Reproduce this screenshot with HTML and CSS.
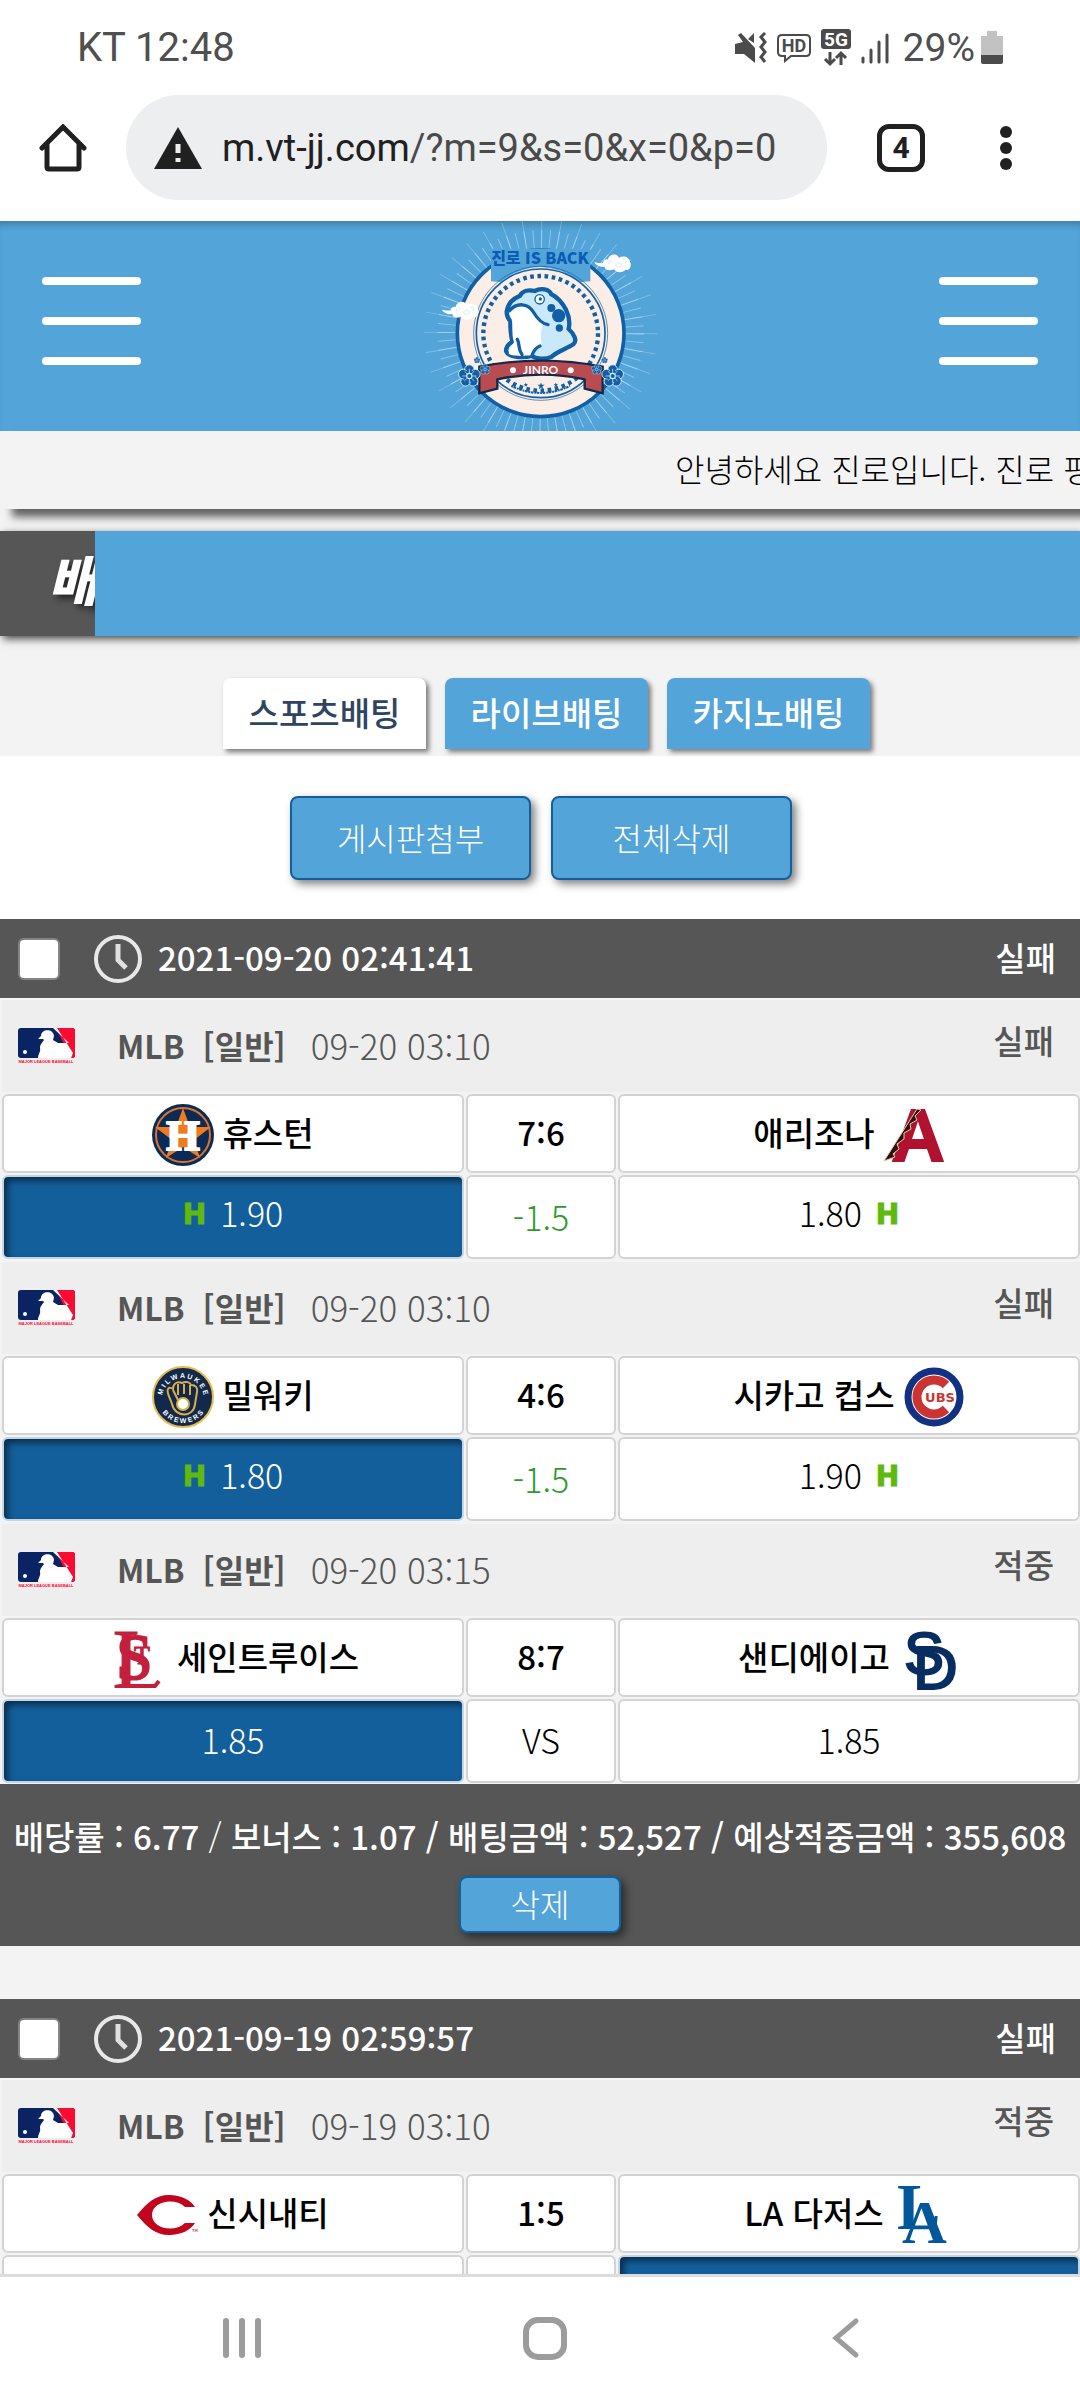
FILE: index.html
```html
<!DOCTYPE html>
<html lang="ko">
  <head>
    <meta charset="utf-8">
    <title>배팅내역</title>
    <meta name="viewport" content="width=device-width, initial-scale=1">
    <link rel="stylesheet" href="styles.css">
  </head>
  <body>
    <!-- shared icons -->
    <svg class="defs" width="0" height="0" aria-hidden="true">
      <symbol id="mlb" viewBox="0 0 57 36">
        <rect width="57" height="30" rx="3" fill="#0a2463"/>
        <path d="M38 0h16a3 3 0 0 1 3 3v24a3 3 0 0 1-3 3h-1z" fill="#fb0a32"/>
        <path d="M35 0h4l16 25-2 5H20c0-4 3-6 2-10 0-4 3-6 4-8l-1-1-5 0 3-3c0-7 12-8 13 0l-1 4 5 3 11 0z" fill="#fff"/>
        <circle cx="7" cy="24" r="2" fill="#fff"/>
      </symbol>
      <symbol id="clock" viewBox="0 0 48 48">
        <circle cx="24" cy="24" r="22" fill="none" stroke="#e8e8e8" stroke-width="4"/>
        <path d="M24 9v16l8 8" fill="none" stroke="#e0e0e0" stroke-width="5"/>
      </symbol>
      <symbol id="flower" viewBox="-34 -34 68 68">
        <g fill="#1160a6" stroke="#fff" stroke-width="2">
          <circle cx="0" cy="-17" r="13"/><circle cx="16" cy="-5" r="13"/><circle cx="10" cy="14" r="13"/>
          <circle cx="-10" cy="14" r="13"/><circle cx="-16" cy="-5" r="13"/>
        </g>
        <circle r="16" fill="#1160a6"/>
        <path d="M0-19V19M-19 0H19M-13-13L13 13M13-13L-13 13" stroke="#d7ebf8" stroke-width="2"/>
        <circle r="7" fill="#1160a6" stroke="#d7ebf8" stroke-width="3"/>
      </symbol>
      <symbol id="cloud" viewBox="0 0 110 60">
        <path d="M0 28c12 2 18 4 26 2 1-8 8-13 15-10 2-16 25-22 33-6 12-8 32-2 33 12 6 10 0 28-14 25-12 10-28 8-34-2-12 6-28 2-28-8-12 2-28-4-31-13z" fill="#fff"/>
        <path d="M46 34c-8-6 4-16 10-7M72 44c-14-4-4-20 8-12 6 5 0 12-6 8M86 20c10-2 12 10 4 10" fill="none" stroke="#b9dcf1" stroke-width="2"/>
      </symbol>
      <symbol id="star" viewBox="-10 -10 20 20">
        <path d="M0-9L2.4-3H9L3.6 1 5.6 8 0 4-5.6 8-3.6 1-9-3h6.6z" fill="#1160a6"/>
      </symbol>
    </svg>

    <div class="status-bar">
      <span>KT 12:48</span>
      <div class="status-icons">
        <svg width="32" height="32" viewBox="0 0 32 32">
          <path d="M0 12l8-2L3 3l3-2 14 15v15L9 22H0zM13 7l6-6v10z" fill="#4b4b4b"/>
          <path d="M30 1l-4 4 4 5-4 5 4 5-4 5 4 5" fill="none" stroke="#4b4b4b" stroke-width="3"/>
        </svg>
        <svg width="34" height="30" viewBox="0 0 34 30">
          <path d="M5 2h24q4 0 4 4v13q0 4-4 4H14l-6 5v-5H5q-4 0-4-4V6q0-4 4-4z" fill="none" stroke="#4b4b4b" stroke-width="2"/>
          <text x="17" y="19" font-size="18" font-weight="bold" text-anchor="middle" fill="#4b4b4b">HD</text>
        </svg>
        <svg width="30" height="38" viewBox="0 0 30 38">
          <rect width="30" height="20" rx="3" fill="#4b4b4b"/>
          <text x="15" y="17" font-size="19" font-weight="bold" text-anchor="middle" fill="#fff">5G</text>
          <path d="M9 23v12M4 30l5 5 5-5M20 36V24M15 29l5-5 5 5" fill="none" stroke="#4b4b4b" stroke-width="3"/>
        </svg>
        <svg width="28" height="32" viewBox="0 0 28 32">
          <path d="M2 26v4M10 18v12M18 10v20M26 3v27" stroke="#4b4b4b" stroke-width="3" stroke-linecap="round"/>
        </svg>
        <div class="battery">
          <span>29%</span>
          <svg width="22" height="34" viewBox="0 0 22 34">
            <path d="M6 0h10v5h6v19H0V5h6z" fill="#c2c2c2"/>
            <path d="M0 24h22v7q0 2-2 2H2q-2 0-2-2z" fill="#4b4b4b"/>
          </svg>
        </div>
      </div>
    </div>

    <div class="toolbar">
      <button class="icon-button" aria-label="홈">
        <svg width="48" height="48" viewBox="0 0 48 48">
          <path d="M3 24L24 3l21 21M8 21v22q0 2 2 2h28q2 0 2-2V21" fill="none" stroke="#202020" stroke-width="5" stroke-linecap="round"/>
        </svg>
      </button>
      <div class="url">
        <svg width="48" height="42" viewBox="0 0 48 42">
          <path d="M24 0l24 42H0z" fill="#202020"/>
          <path d="M24 17v9M24 31v4" stroke="#edeef0" stroke-width="5"/>
        </svg>
        <span>m.vt-jj.com<span class="url-path">/?m=9&amp;s=0&amp;x=0&amp;p=0</span></span>
      </div>
      <button class="tab-count">4</button>
      <button class="icon-button" aria-label="메뉴">
        <svg width="12" height="48" viewBox="0 0 12 48" fill="#202020">
          <circle cx="6" cy="8" r="6"/><circle cx="6" cy="24" r="6"/><circle cx="6" cy="40" r="6"/>
        </svg>
      </button>
    </div>

    <main class="page">
      <header class="header">
        <button class="menu" aria-label="왼쪽 메뉴"><i></i><i></i><i></i></button>
        <svg class="logo" width="280" height="210" viewBox="0 3 840 630">
          <g fill="none" stroke="#fff">
            <circle cx="422" cy="340" r="280" stroke-width="60" stroke-opacity=".35" pathLength="720" stroke-dasharray="1.2 8.8"/>
            <circle cx="422" cy="340" r="300" stroke-width="100" stroke-opacity=".25" pathLength="720" stroke-dasharray="1 19"/>
          </g>
          <circle cx="422" cy="340" r="250" fill="#fbeee6" stroke="#1160a6" stroke-width="11"/>
          <path d="M273 184V86h298v98l-30 2q-120-90-240 0z" fill="#53a4d8"/>
          <g fill="none" stroke="#1160a6">
            <circle cx="422" cy="340" r="193" fill="#fbeee6" stroke-width="5"/>
            <circle cx="422" cy="340" r="201" stroke-width="2"/>
          </g>
          <circle cx="422" cy="340" r="172" fill="none" stroke="#1160a6" stroke-width="13" pathLength="50" stroke-dasharray=".5 .5"/>
          <text class="logo-title" x="420" y="132" text-anchor="middle">진로 IS BACK</text>
          <!-- toad -->
          <path d="M320 275c5-28 18-38 40-48 8-16 28-18 44-14 18-10 44-6 50 10 22 10 34 28 44 46 10 20 12 40 8 58 18 16 26 36 14 46-20 14-48 20-66 38-20 8-50 6-58-4-24 8-72 6-78-14 0-16 12-24 20-28-6-16-8-50-6-62-10-8-12-16-12-28z" fill="#c9e8f9" stroke="#1160a6" stroke-width="13"/>
          <path d="M330 282c18-30 50-28 66-6 12 18 22 28 34 34-10 24-8 50-4 66-14 8-20 24-30 30-24 2-66 4-70-6 2-18 12-24 16-34-10-30 2-50-12-84z" fill="#fff"/>
          <path d="M328 272c24-26 56-22 72 4 12 20 24 36 44 38M352 358c8 12 0 26 14 46M420 378c-16 6-20 18-24 28" fill="none" stroke="#1160a6" stroke-width="10" stroke-linecap="round"/>
          <circle cx="419" cy="238" r="14" fill="#fff" stroke="#1160a6" stroke-width="4"/>
          <circle cx="421" cy="237" r="5" fill="#1160a6"/>
          <g fill="#1160a6">
            <circle cx="454" cy="264" r="12"/><circle cx="476" cy="287" r="20"/><circle cx="478" cy="324" r="11"/>
          </g>
          <!-- ribbon -->
          <path d="M238 440q185-36 370 0v80l-54-14v-28q-130-28-262 0v28l-54 14z" fill="#b94c50" stroke="#13294b" stroke-width="7"/>
          <text x="422" y="461" font-family="Lato" font-size="36" font-weight="bold" text-anchor="middle" fill="#fff">JINRO</text>
          <circle cx="339" cy="451" r="9" fill="#fff"/>
          <circle cx="512" cy="451" r="9" fill="#fff"/>
          <use href="#star" x="411" y="486" width="24" height="24"/>
          <use href="#star" x="370" y="487" width="15" height="15"/>
          <use href="#star" x="460" y="487" width="15" height="15"/>
          <path d="M334 498q88 42 176 0" fill="none" stroke="#1160a6" stroke-width="6" stroke-dasharray="5 2 8 3"/>
          <use href="#flower" x="170" y="430" width="76" height="76"/>
          <use href="#flower" x="237" y="430" width="36" height="36"/>
          <use href="#flower" x="220" y="410" width="22" height="22"/>
          <use href="#flower" x="600" y="430" width="76" height="76"/>
          <use href="#flower" x="572" y="430" width="36" height="36"/>
          <use href="#flower" x="603" y="410" width="22" height="22"/>
          <use href="#cloud" x="126" y="241" width="110" height="60"/>
          <use href="#cloud" x="583" y="99" width="110" height="60"/>
        </svg>
        <button class="menu" aria-label="오른쪽 메뉴"><i></i><i></i><i></i></button>
      </header>

      <div class="notice">안녕하세요 진로입니다. 진로 평</div>

      <div class="title-bar"><h1>배</h1></div>

      <div class="tabs">
        <button class="tab active">스포츠배팅</button>
        <button class="tab">라이브배팅</button>
        <button class="tab">카지노배팅</button>
      </div>

      <div class="actions">
        <button class="btn">게시판첨부</button>
        <button class="btn">전체삭제</button>
      </div>

      <section class="bet">
        <div class="bet-head">
          <input type="checkbox" aria-label="2021-09-20 02:41:41">
          <svg width="48" height="48"><use href="#clock"/></svg>
          <span class="bet-time">2021-09-20 02:41:41</span>
          <b>실패</b>
        </div>

        <div class="match">
          <div class="league">
            <svg class="mlb" width="57" height="36" viewBox="0 0 57 36"><use href="#mlb"/><text x="28" y="35">MAJOR LEAGUE BASEBALL</text></svg>
            <b>MLB</b><b>[일반]</b>
            <span class="match-time">09-20 03:10</span>
            <span class="result">실패</span>
          </div>
          <div class="grid">
            <div class="cell team">
              <svg width="62" height="62" viewBox="0 0 62 62">
                <circle cx="31" cy="31" r="31" fill="#0b2a55"/>
                <circle cx="31" cy="31" r="27" fill="none" stroke="#d9742f" stroke-width="2"/>
                <path d="M31 4l7 19h21L42 36l6 18-17-11-17 11 6-18L3 23h21z" fill="#f07a1e"/>
                <text x="31" y="46" font-family="Liberation Serif" font-size="43" font-weight="bold" text-anchor="middle" fill="#fff" stroke="#fff" stroke-width="2">H</text>
              </svg>
              휴스턴
            </div>
            <div class="cell team">7:6</div>
            <div class="cell team">
              애리조나
              <svg width="62" height="62" viewBox="0 0 62 62">
                <text x="35" y="57" font-family="Liberation Sans" font-size="74" font-weight="bold" text-anchor="middle" fill="#b1122f" stroke="#b1122f" stroke-width="2">A</text>
                <path d="M1 57L34 5l4 1-6 6 2 4-7 4 1 5-7 4 0 6-7 5 2 5-6 5 2 3z" fill="#2b1210" stroke="#e6cfa5" stroke-width="1"/>
              </svg>
            </div>
            <div class="cell odds marked picked"><i class="handicap">H</i>1.90</div>
            <div class="cell odds line">-1.5</div>
            <div class="cell odds marked">1.80<i class="handicap">H</i></div>
          </div>
        </div>

        <div class="match">
          <div class="league">
            <svg class="mlb" width="57" height="36" viewBox="0 0 57 36"><use href="#mlb"/><text x="28" y="35">MAJOR LEAGUE BASEBALL</text></svg>
            <b>MLB</b><b>[일반]</b>
            <span class="match-time">09-20 03:10</span>
            <span class="result">실패</span>
          </div>
          <div class="grid">
            <div class="cell team">
              <svg width="62" height="62" viewBox="0 0 62 62">
                <defs>
                  <path id="arc-top" d="M10 33a21 21 0 0 1 42 0"/>
                  <path id="arc-bottom" d="M5 31a26 26 0 0 0 52 0"/>
                </defs>
                <circle cx="31" cy="31" r="30" fill="#13294b" stroke="#e5bb52" stroke-width="2"/>
                <g font-family="Liberation Sans" font-size="7" font-weight="bold" fill="#fff" text-anchor="middle">
                  <text><textPath href="#arc-top" startOffset="50%">M I L W A U K E E</textPath></text>
                  <text><textPath href="#arc-bottom" startOffset="50%">B R E W E R S</textPath></text>
                </g>
                <path d="M20 38c-2-6-6-12-4-15 1-2 4-1 5 0 0-6 5-8 9-6 4-2 8-1 9 2 5 0 7 3 6 7l-2 12c-1 14-20 14-23 0zM21 24l5 10M26 18v11M32 18v10M38 19v10" fill="none" stroke="#d8ae4c" stroke-width="2"/>
                <circle cx="31" cy="38" r="6" fill="#fff" stroke="#d8ae4c" stroke-width="2"/>
              </svg>
              밀워키
            </div>
            <div class="cell team">4:6</div>
            <div class="cell team">
              시카고 컵스
              <svg width="62" height="62" viewBox="0 0 62 62">
                <circle cx="31" cy="31" r="26" fill="#fff" stroke="#123183" stroke-width="7"/>
                <path d="M43 19a17 17 0 1 0 0 24" fill="none" stroke="#cb3433" stroke-width="9"/>
                <text x="37" y="36" font-family="DejaVu Sans" font-size="13" font-weight="bold" text-anchor="middle" fill="#cb3433">UBS</text>
              </svg>
            </div>
            <div class="cell odds marked picked"><i class="handicap">H</i>1.80</div>
            <div class="cell odds line">-1.5</div>
            <div class="cell odds marked">1.90<i class="handicap">H</i></div>
          </div>
        </div>

        <div class="match">
          <div class="league">
            <svg class="mlb" width="57" height="36" viewBox="0 0 57 36"><use href="#mlb"/><text x="28" y="35">MAJOR LEAGUE BASEBALL</text></svg>
            <b>MLB</b><b>[일반]</b>
            <span class="match-time">09-20 03:15</span>
            <span class="result">적중</span>
          </div>
          <div class="grid">
            <div class="cell team">
              <svg width="62" height="62" viewBox="0 0 62 62">
                <g font-family="Liberation Serif" fill="#c2203c" stroke="#c2203c">
                  <text x="9" y="51" font-size="66" stroke-width="2">S</text>
                  <text x="5" y="60" font-size="84" stroke-width="1">I</text>
                  <text x="27" y="36" font-size="26" stroke-width="1">T</text>
                </g>
                <path d="M19 58h29l4-5" fill="none" stroke="#c2203c" stroke-width="4"/>
              </svg>
              세인트루이스
            </div>
            <div class="cell team">8:7</div>
            <div class="cell team">
              샌디에이고
              <svg width="62" height="62" viewBox="0 0 62 62">
                <g font-family="Liberation Sans" fill="#072d61" stroke="#072d61" stroke-width="2">
                  <text x="6" y="46" font-size="60">S</text>
                  <text x="15" y="61" font-size="62">D</text>
                </g>
              </svg>
            </div>
            <div class="cell odds picked">1.85</div>
            <div class="cell odds">VS</div>
            <div class="cell odds">1.85</div>
          </div>
        </div>

        <div class="bet-foot">
          <p><b>배당률 : 6.77</b> / <b>보너스 : 1.07 / 배팅금액 : 52,527 / 예상적중금액 : 355,608</b></p>
          <button class="btn btn-small">삭제</button>
        </div>
      </section>

      <section class="bet">
        <div class="bet-head">
          <input type="checkbox" aria-label="2021-09-19 02:59:57">
          <svg width="48" height="48"><use href="#clock"/></svg>
          <span class="bet-time">2021-09-19 02:59:57</span>
          <b>실패</b>
        </div>

        <div class="match">
          <div class="league">
            <svg class="mlb" width="57" height="36" viewBox="0 0 57 36"><use href="#mlb"/><text x="28" y="35">MAJOR LEAGUE BASEBALL</text></svg>
            <b>MLB</b><b>[일반]</b>
            <span class="match-time">09-19 03:10</span>
            <span class="result">적중</span>
          </div>
          <div class="grid">
            <div class="cell team">
              <svg width="62" height="62" viewBox="0 0 62 62">
                <path d="M0 31C10 19 18 11 32 11c12 0 22 5 26 12H48C38 13 15 17 15 31s23 18 33 8h10c-4 7-14 12-26 12C18 51 10 43 0 31z" fill="#c2051e"/>
                <text x="55" y="48" font-size="4" fill="#c2051e">TM</text>
              </svg>
              신시내티
            </div>
            <div class="cell team">1:5</div>
            <div class="cell team">
              LA 다저스
              <svg width="62" height="62" viewBox="0 0 62 62">
                <g font-family="Liberation Serif" font-weight="bold" fill="#04579b">
                  <text x="5" y="45" font-size="65">L</text>
                  <text x="10" y="59" font-size="62">A</text>
                </g>
              </svg>
            </div>
            <div class="cell odds"></div>
            <div class="cell odds"></div>
            <div class="cell odds picked"></div>
          </div>
        </div>
      </section>
    </main>

    <nav class="nav">
      <button class="icon-button" aria-label="최근 앱">
        <svg width="40" height="42" viewBox="0 0 40 42">
          <path d="M4 4v34M20 4v34M36 4v34" stroke="#9c9c9c" stroke-width="6" stroke-linecap="round"/>
        </svg>
      </button>
      <button class="icon-button" aria-label="홈 화면">
        <svg width="44" height="44" viewBox="0 0 44 44">
          <rect x="3" y="4" width="38" height="37" rx="12" fill="none" stroke="#9c9c9c" stroke-width="6"/>
        </svg>
      </button>
      <button class="icon-button" aria-label="뒤로">
        <svg width="40" height="42" viewBox="0 0 40 42">
          <path d="M29 4L9 21l20 17" fill="none" stroke="#9c9c9c" stroke-width="5" stroke-linecap="round"/>
        </svg>
      </button>
    </nav>
  </body>
</html>
```
FILE: styles.css
```css
* {
  box-sizing: border-box;
}
body {
  display: flex;
  flex-direction: column;
  height: 100vh;
  margin: 0;
  background-color: #fff;
  font-family: "Noto Sans CJK KR", sans-serif;
  font-size: 32px;
  line-height: 40px;
  color: #000;
}
button {
  margin: 0;
  padding: 0;
  border: 0;
  background: none;
  font: inherit;
  color: inherit;
  cursor: pointer;
}
svg {
  display: block;
  flex: none;
}
.defs {
  position: absolute;
}
.status-bar {
  display: flex;
  justify-content: space-between;
  align-items: center;
  height: 95px;
  padding: 0 77px;
  font-family: Roboto, sans-serif;
  font-size: 40px;
  color: #4f4f4f;
}
.status-icons {
  display: flex;
  align-items: center;
  gap: 10px;
}
.battery {
  display: flex;
  align-items: center;
  gap: 6px;
  padding-left: 4px;
  font-size: 39px;
}
.toolbar {
  display: flex;
  align-items: center;
  height: 126px;
  padding: 0 68px 21px 39px;
  font-family: Roboto, sans-serif;
}
.icon-button {
  display: flex;
}
.url {
  display: flex;
  flex: 1;
  align-items: center;
  gap: 20px;
  height: 105px;
  margin: 0 50px 0 39px;
  padding-left: 28px;
  border-radius: 53px;
  background-color: #edeef0;
  font-size: 38px;
  color: #202020;
  white-space: nowrap;
}
.url-path {
  color: #4a4a4a;
}
.tab-count {
  width: 48px;
  height: 48px;
  margin-right: 75px;
  border: 5px solid #202020;
  border-radius: 12px;
  font-size: 30px;
  line-height: 38px;
  font-weight: bold;
  color: #202020;
}
.page {
  flex: 1;
  min-height: 0;
  overflow: hidden;
  background-color: #f3f3f3;
}
.header {
  display: flex;
  justify-content: space-between;
  align-items: center;
  padding: 0 42px;
  background-color: #53a4d8;
  box-shadow: inset 0 8px 8px -6px rgba(0, 0, 0, 0.3);
}
.menu {
  display: flex;
  flex-direction: column;
  gap: 32px;
  width: 99px;
  padding-bottom: 10px;
}
.menu i {
  height: 8px;
  border-radius: 4px;
  background-color: #fff;
}
.logo-title {
  font-family: "Noto Sans CJK KR", sans-serif;
  font-size: 48px;
  font-weight: 900;
  fill: #0a5cb5;
}
.notice {
  height: 78px;
  padding-left: 675px;
  overflow: hidden;
  font-weight: 300;
  line-height: 75px;
  white-space: nowrap;
  box-shadow: 12px 8px 8px rgba(0, 0, 0, 0.6);
}
.title-bar {
  height: 105px;
  margin-top: 22px;
  background-color: #53a4d8;
  box-shadow: 3px 3px 8px rgba(0, 0, 0, 0.7);
}
.title-bar h1 {
  width: 95px;
  height: 105px;
  margin: 0;
  padding-left: 48px;
  overflow: hidden;
  background-color: #565656;
  font-size: 54px;
  font-style: italic;
  font-weight: 900;
  line-height: 94px;
  color: #fff;
  text-shadow: 4px 4px 6px #222;
}
.tabs {
  display: flex;
  justify-content: center;
  gap: 19px;
  padding: 42px 0 7px 13px;
}
.tab {
  width: 203px;
  height: 71px;
  padding-bottom: 3px;
  border-radius: 8px 8px 0 0;
  background-color: #53a4d8;
  box-shadow: 3px 3px 5px rgba(0, 0, 0, 0.5);
  font-size: 33px;
  font-weight: 500;
  color: #fff;
}
.tab.active {
  background-color: #fff;
  color: #2e4560;
}
.actions {
  display: flex;
  justify-content: center;
  gap: 20px;
  padding: 40px 0 39px 2px;
  background-color: #fff;
}
.btn {
  width: 241px;
  height: 84px;
  padding-bottom: 3px;
  border: 2px solid #135f9c;
  border-radius: 8px;
  background-color: #53a4d8;
  box-shadow: 4px 4px 8px rgba(0, 0, 0, 0.5);
  font-weight: 300;
  color: #fff;
}
.btn-small {
  width: 162px;
  height: 57px;
}
.bet {
  margin-bottom: 53px;
}
.bet-head {
  display: flex;
  align-items: center;
  height: 79px;
  padding: 0 24px 0 18px;
  background-color: #565656;
  font-size: 33px;
  color: #fff;
}
.bet-head input {
  appearance: none;
  width: 42px;
  height: 42px;
  margin: 0 34px 0 0;
  border: 2px solid #858585;
  border-radius: 6px;
  background-color: #fff;
}
.bet-head b,
.bet-time {
  padding-bottom: 3px;
  font-weight: 500;
}
.bet-time {
  flex: 1;
  padding-left: 16px;
}
.match {
  padding: 2px 0 1px 2px;
}
.league {
  display: flex;
  align-items: center;
  height: 92px;
  padding: 0 26px 0 16px;
  background-color: #eee;
  color: #565656;
}
.league b,
.match-time {
  padding-bottom: 3px;
}
.league b:first-of-type {
  margin: 0 18px 0 42px;
}
.mlb text {
  font-family: "Liberation Sans", sans-serif;
  font-size: 4px;
  font-weight: bold;
  text-anchor: middle;
  fill: #fb0a32;
}
.match-time {
  flex: 1;
  padding-left: 25px;
  font-size: 35px;
  font-weight: 300;
}
.result {
  padding-bottom: 13px;
  font-size: 33px;
  font-weight: 500;
}
.grid {
  display: grid;
  grid-template-columns: 462fr 150fr 462fr;
  gap: 2px;
  padding-top: 2px;
}
.cell {
  display: flex;
  align-items: center;
  justify-content: center;
  padding-bottom: 3px;
  border: 2px solid #d3d3d3;
  border-radius: 6px;
  background-color: #fff;
}
.team {
  gap: 8px;
  height: 79px;
  font-size: 33px;
  font-weight: 500;
}
.team svg {
  margin-top: 6px;
}
.odds {
  gap: 14px;
  height: 84px;
  font-size: 34px;
  font-weight: 300;
}
.marked {
  padding-bottom: 8px;
}
.handicap {
  padding-top: 3px;
  font-family: "DejaVu Sans", sans-serif;
  font-size: 28px;
  font-style: normal;
  font-weight: bold;
  color: #5fb910;
  -webkit-text-stroke: 1px #5fb910;
}
.line {
  padding-bottom: 0;
  color: #2f9a2f;
}
.picked {
  border-color: #c5d5e3;
  background-color: #135f9c;
  box-shadow: inset 4px 4px 6px rgba(0, 0, 0, 0.5);
  color: #fff;
}
.bet-foot {
  display: flex;
  flex-direction: column;
  align-items: center;
  gap: 20px;
  padding: 32px 0 13px;
  background-color: #565656;
  color: #fff;
}
.bet-foot p {
  margin: 0;
  font-size: 33px;
  font-weight: 300;
  white-space: nowrap;
}
.bet-foot b {
  font-weight: 500;
}
.nav {
  display: flex;
  align-items: center;
  justify-content: space-between;
  height: 126px;
  padding: 0 213px 2px 222px;
  border-top: 3px solid #ddd;
  background-color: #fff;
}
```
